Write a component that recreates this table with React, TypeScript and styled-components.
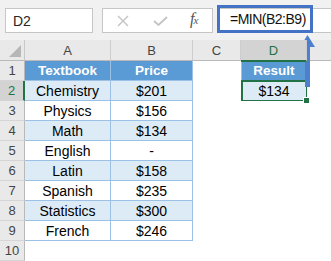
import { FunctionComponent } from 'react'
import styled, { createGlobalStyle, css } from 'styled-components'

const GlobalStyle = createGlobalStyle`
    html, body {
        margin: 0;
        padding: 0;
        background: #fff;
    }
    * {
        box-sizing: border-box;
    }
`

const rows: [string, string][] = [
    ['Textbook', 'Price'],
    ['Chemistry', '$201'],
    ['Physics', '$156'],
    ['Math', '$134'],
    ['English', '-'],
    ['Latin', '$158'],
    ['Spanish', '$235'],
    ['Statistics', '$300'],
    ['French', '$246'],
]

const columns = ['A', 'B', 'C', 'D', '']

type Fill = 'head' | 'light' | 'plain' | 'none'

const fillFor = (rowIdx: number): Fill => {
    if (rowIdx === 0) return 'head'
    return rowIdx % 2 === 1 ? 'light' : 'plain'
}

const App: FunctionComponent = () => {
    return (
        <Page>
            <GlobalStyle />
            <FormulaBar>
                <NameBox>D2</NameBox>
                <ButtonsBox>
                    <BarIcon viewBox="0 0 12 12" width={12} height={12}>
                        <path d="M1 1 L11 11 M11 1 L1 11" stroke="#c3c3c3" strokeWidth="1.4" fill="none" />
                    </BarIcon>
                    <BarIcon viewBox="0 0 15 10" width={15} height={10}>
                        <path d="M1 5 L5.5 9 L14 1" stroke="#c3c3c3" strokeWidth="1.8" fill="none" />
                    </BarIcon>
                    <Fx>
                        f<small>x</small>
                    </Fx>
                </ButtonsBox>
                <FormulaInput>
                    <FormulaHighlight>=MIN(B2:B9)</FormulaHighlight>
                </FormulaInput>
            </FormulaBar>

            <Sheet>
                <Corner />
                {columns.map((col, idx) => (
                    <ColHeader key={idx} $selected={col === 'D'} $last={col === ''}>
                        {col}
                    </ColHeader>
                ))}

                {rows.map(([name, price], idx) => (
                    <Row key={idx}>
                        <RowHeader $selected={idx === 1}>{idx + 1}</RowHeader>
                        <Cell $fill={fillFor(idx)}>{name}</Cell>
                        <Cell $fill={fillFor(idx)}>{price}</Cell>
                        <Cell $fill="none" />
                        {idx === 0 && <Cell $fill="head" $boxLeft>Result</Cell>}
                        {idx === 1 && <Cell $fill="light" $boxLeft $selected>$134</Cell>}
                        {idx > 1 && <Cell $fill="none" />}
                        <Cell $fill="none" />
                    </Row>
                ))}
                <Row>
                    <RowHeader>10</RowHeader>
                    <Cell $fill="none" />
                    <Cell $fill="none" />
                    <Cell $fill="none" />
                    <Cell $fill="none" />
                    <Cell $fill="none" />
                </Row>
            </Sheet>

            <Arrow viewBox="0 0 17 52" width={17} height={52}>
                <polygon points="8.5,0 16,12 1,12" fill="#4e7fcf" />
                <rect x="6" y="11" width="5" height="41" fill="#4e7fcf" />
            </Arrow>
        </Page>
    )
}

export default App

const Page = styled.div`
    position: relative;
    width: 331px;
    height: 261px;
    overflow: hidden;
    background: #fff;
    font-family: 'Liberation Sans', Arial, sans-serif;
`

const FormulaBar = styled.div`
    display: flex;
    align-items: flex-start;
    height: 40px;
    padding: 8px 0 0 5px;
    background: #f1f1f1;
`

const NameBox = styled.div`
    width: 88px;
    height: 25px;
    padding: 0 0 0 7px;
    display: flex;
    align-items: center;
    background: #fff;
    border: 1px solid #c6c6c6;
    font-size: 14px;
    color: #262626;
`

const ButtonsBox = styled.div`
    width: 111px;
    height: 25px;
    margin-left: 9px;
    display: flex;
    align-items: center;
    padding: 0 0 0 14px;
    background: #fff;
    border: 1px solid #c6c6c6;
`

const BarIcon = styled.svg`
    display: block;
    &:first-child {
        margin-right: 24px;
    }
    &:nth-child(2) {
        margin-right: 22px;
    }
`

const Fx = styled.span`
    font-family: 'Liberation Serif', 'Times New Roman', serif;
    font-style: italic;
    font-size: 16px;
    color: #555;
    letter-spacing: -1px;
    margin-top: -3px;

    small {
        font-size: 11px;
    }
`

const FormulaInput = styled.div`
    flex: 1;
    height: 25px;
    margin-left: 4px;
    display: flex;
    background: #fff;
    border: 1px solid #c6c6c6;
    border-right: none;
`

const FormulaHighlight = styled.div`
    width: 96px;
    height: 28px;
    margin: -4px 0 0 -1px;
    padding: 0 0 1px 10px;
    display: flex;
    align-items: center;
    border: 3px solid #4472c4;
    font-size: 14px;
    letter-spacing: -0.5px;
    color: #111;
`

const Sheet = styled.div`
    display: grid;
    grid-template-columns: 25px 86px 82px 48px 66px 1fr;
    grid-template-rows: 21px;
    grid-auto-rows: 20px;
    background: #fff;
`

const Row = styled.div`
    display: contents;
`

const Corner = styled.div`
    position: relative;
    background: #e9e9e9;
    border-right: 1px solid #c8c8c8;
    border-bottom: 1px solid #b9b9b9;

    &::after {
        content: '';
        position: absolute;
        right: 3px;
        bottom: 3px;
        border-style: solid;
        border-width: 0 0 12px 12px;
        border-color: transparent transparent #b7b7b7 transparent;
    }
`

const headerText = css`
    display: flex;
    align-items: center;
    justify-content: center;
    font-size: 13px;
    color: #444;
`

const ColHeader = styled.div<{ $selected?: boolean; $last?: boolean }>`
    ${headerText}
    background: ${({ $selected }) => ($selected ? '#d3d3d3' : '#e9e9e9')};
    border-right: ${({ $last }) => ($last ? 'none' : '1px solid #cdcdcd')};
    border-bottom: 1px solid #b9b9b9;
    ${({ $selected }) =>
        $selected &&
        css`
            color: #217346;
            border-bottom: 2px solid #217346;
            margin-bottom: -1px;
            z-index: 1;
        `}
`

const RowHeader = styled.div<{ $selected?: boolean }>`
    ${headerText}
    background: ${({ $selected }) => ($selected ? '#d3d3d3' : '#e9e9e9')};
    border-right: 1px solid #b9b9b9;
    border-bottom: 1px solid #d5d5d5;
    ${({ $selected }) =>
        $selected &&
        css`
            color: #217346;
            border-right: 2px solid #217346;
        `}
`

const fills: Record<Fill, string> = {
    head: '#5b9bd5',
    light: '#ddebf7',
    plain: '#fff',
    none: '#fff',
}

const Cell = styled.div<{ $fill: Fill; $boxLeft?: boolean; $selected?: boolean }>`
    position: relative;
    display: flex;
    align-items: center;
    justify-content: center;
    font-size: 14px;
    color: #000;
    background: ${({ $fill }) => fills[$fill]};
    ${({ $fill }) =>
        $fill !== 'none' &&
        css`
            border-right: 1px solid #9bc2e6;
            border-bottom: 1px solid #9bc2e6;
        `}
    ${({ $fill }) =>
        $fill === 'head' &&
        css`
            color: #fff;
            font-weight: bold;
            font-size: 13.5px;
        `}
    ${({ $boxLeft }) => $boxLeft && 'border-left: 1px solid #9bc2e6;'}
    ${({ $selected }) =>
        $selected &&
        css`
            &::after {
                content: '';
                position: absolute;
                left: -1px;
                top: -1px;
                right: -2px;
                bottom: -2px;
                border: 2px solid #217346;
            }
            &::before {
                content: '';
                position: absolute;
                right: -4px;
                bottom: -4px;
                width: 5px;
                height: 5px;
                background: #217346;
                border: 1px solid #fff;
                z-index: 2;
            }
        `}
`

const Arrow = styled.svg`
    position: absolute;
    left: 299px;
    top: 35px;
    display: block;
`
